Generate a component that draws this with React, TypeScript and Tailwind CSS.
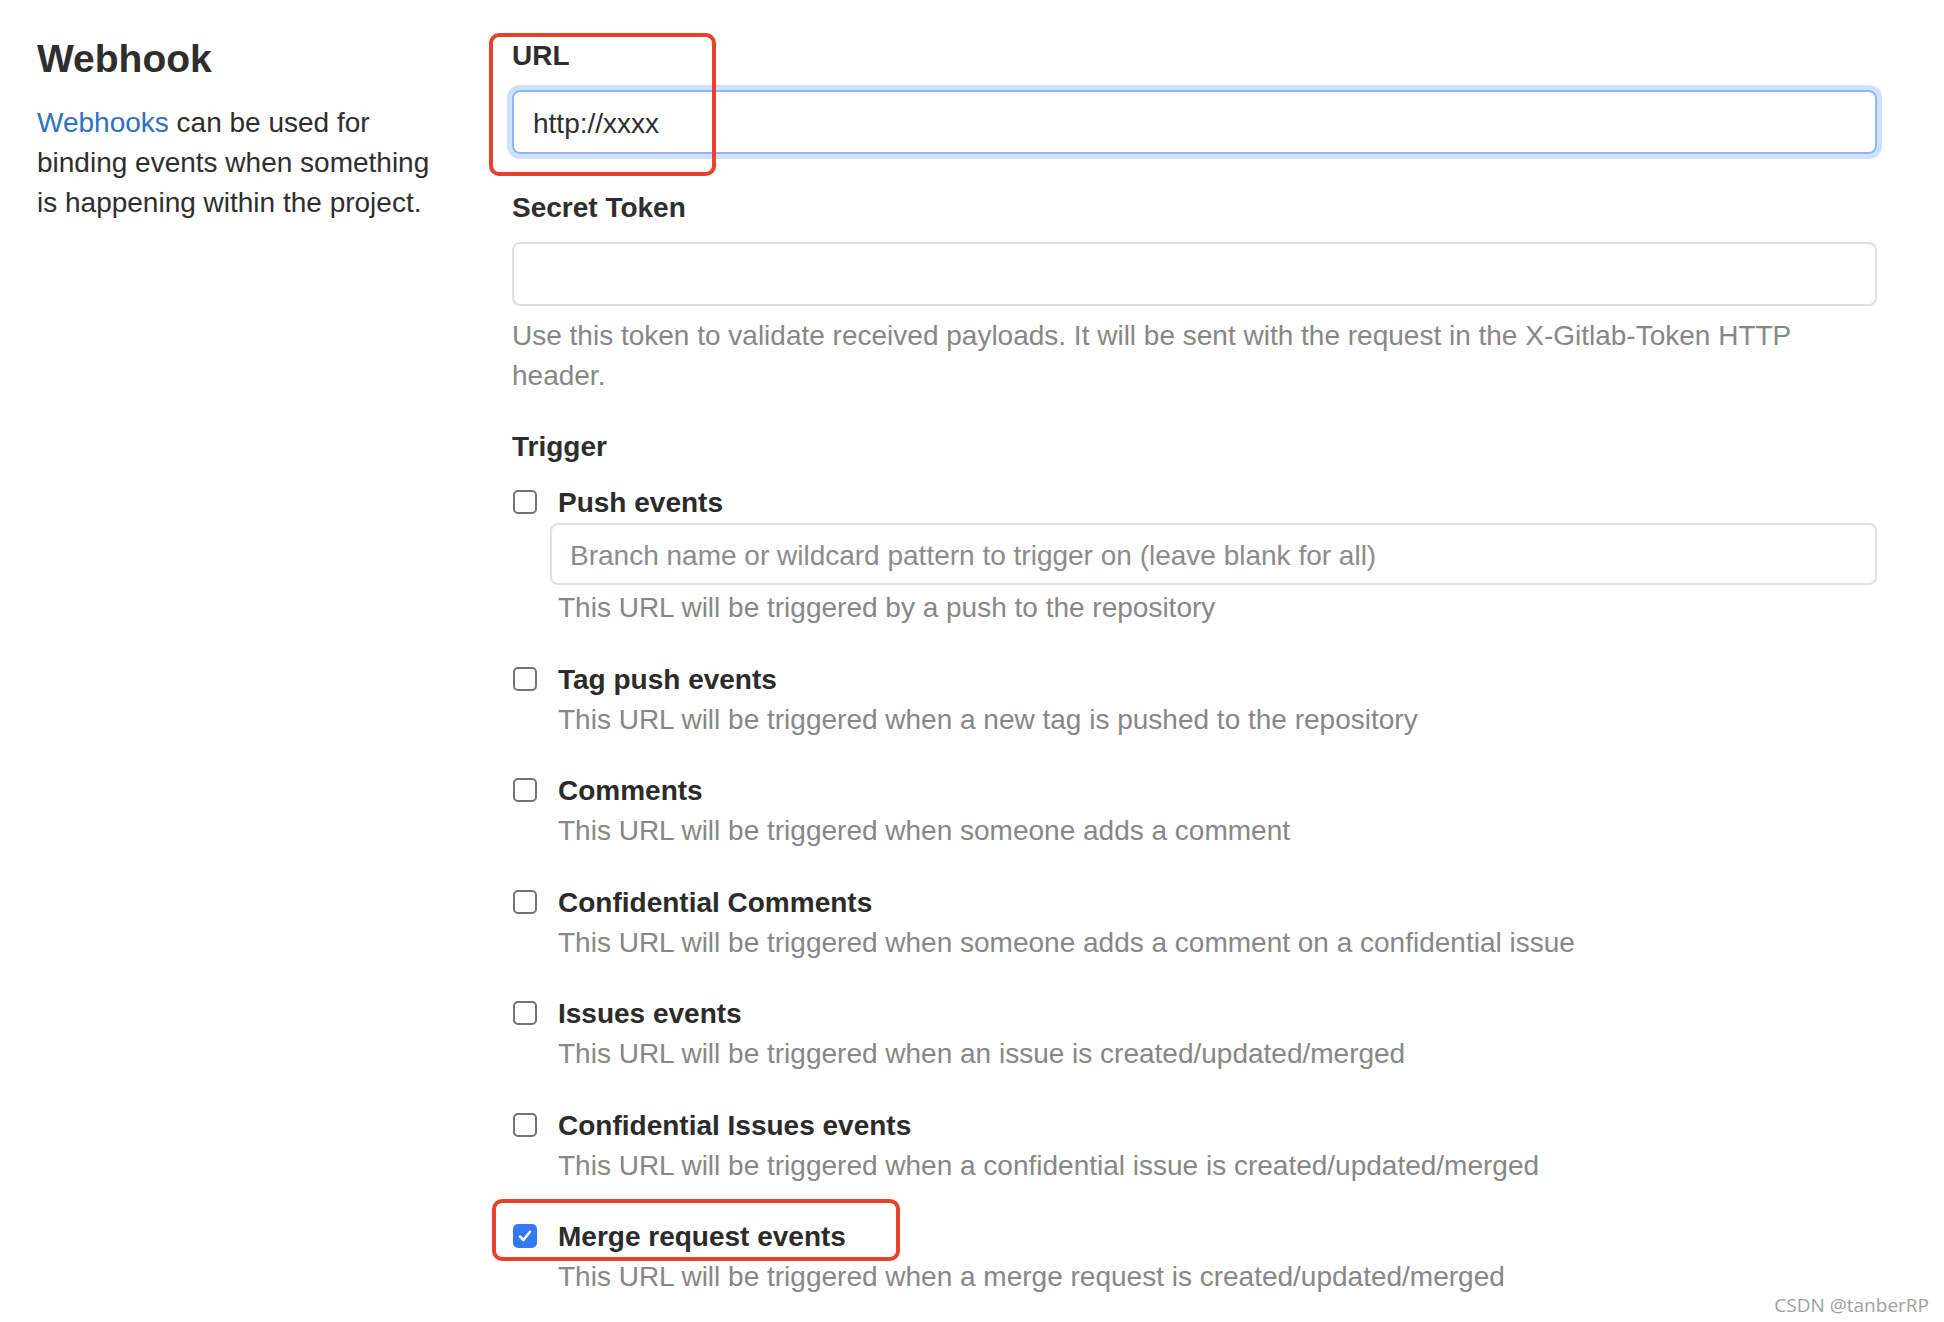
import React from "react";

type Trigger = {
  label: string;
  help: string;
  branch?: boolean;
  checked?: boolean;
  highlight?: boolean;
};

const triggers: Trigger[] = [
  { label: "Push events", help: "This URL will be triggered by a push to the repository", branch: true },
  { label: "Tag push events", help: "This URL will be triggered when a new tag is pushed to the repository" },
  { label: "Comments", help: "This URL will be triggered when someone adds a comment" },
  { label: "Confidential Comments", help: "This URL will be triggered when someone adds a comment on a confidential issue" },
  { label: "Issues events", help: "This URL will be triggered when an issue is created/updated/merged" },
  { label: "Confidential Issues events", help: "This URL will be triggered when a confidential issue is created/updated/merged" },
  {
    label: "Merge request events",
    help: "This URL will be triggered when a merge request is created/updated/merged",
    checked: true,
    highlight: true,
  },
];

function Checkbox({ checked }: { checked?: boolean }) {
  if (checked) {
    return (
      <span className="ml-[1px] flex h-[24px] w-[24px] shrink-0 items-center justify-center rounded-[5px] bg-[#3478f6]">
        <svg width="16" height="16" viewBox="0 0 16 16" fill="none">
          <path d="M3 8.6 6.4 12 13 3.8" stroke="white" strokeWidth="2.6" strokeLinecap="round" strokeLinejoin="round" />
        </svg>
      </span>
    );
  }
  return <span className="ml-[1px] block h-[24px] w-[24px] shrink-0 rounded-[5px] border-2 border-[#747474] bg-white" />;
}

function TriggerRow({ item }: { item: Trigger }) {
  return (
    <div className="relative mb-[30.5px]">
      {item.highlight && (
        <div className="pointer-events-none absolute left-[-20px] top-[-17px] h-[62px] w-[408px] rounded-[10px] border-4 border-[#e8412c]" />
      )}
      <label className="flex h-[40px] items-center">
        <Checkbox checked={item.checked} />
        <span className="ml-[21px] pt-[2px] text-[28px] font-bold leading-[40px] text-[#2b2b2b]">{item.label}</span>
      </label>
      {item.branch && (
        <input
          readOnly
          placeholder="Branch name or wildcard pattern to trigger on (leave blank for all)"
          className="ml-[38px] mt-[1px] block h-[62px] w-[1327px] rounded-[8px] border-2 border-[#e0e0e0] px-[18px] pt-[3px] text-[28px] text-[#2e2e2e] outline-none placeholder:text-[#8c8c8c]"
        />
      )}
      <p className={`ml-[46px] pt-[1px] text-[28px] leading-[40px] text-[#878787] ${item.branch ? "mt-[2px]" : ""}`}>
        {item.help}
      </p>
    </div>
  );
}

export default function App() {
  return (
    <div className="relative flex min-h-[1322px] w-[1944px] bg-white font-['Liberation_Sans',Arial,sans-serif] text-[#2e2e2e]">
      <aside className="w-[512px] shrink-0 pl-[37px] pt-[36px]">
        <h4 className="text-[39px] font-bold leading-[46px] text-[#2e2e2e]">Webhook</h4>
        <p className="mt-[21px] w-[412px] text-[28px] leading-[40px] text-[#2e2e2e]">
          <span className="text-[#2f6fc4]">Webhooks</span> can be used for binding events when something is happening
          within the project.
        </p>
      </aside>

      <section className="w-[1365px] pt-[35px]">
        <div className="relative">
          <div className="pointer-events-none absolute left-[-23px] top-[-2px] h-[143px] w-[227px] rounded-[10px] border-4 border-[#e8412c]" />
          <div className="pt-[1px] text-[28px] font-bold leading-[40px]">URL</div>
          <input
            readOnly
            defaultValue="http://xxxx"
            className="mt-[14px] block h-[64px] w-full rounded-[8px] border-2 border-[#8db6f5] px-[19px] pt-[4px] text-[28px] text-[#2e2e2e] shadow-[0_0_0_5px_#cfe1fc] outline-none"
          />
        </div>

        <div className="mt-[33px] pt-[1px] text-[28px] font-bold leading-[40px]">Secret Token</div>
        <input
          readOnly
          className="mt-[14px] block h-[64px] w-full rounded-[8px] border-2 border-[#e0e0e0] px-[19px] text-[28px] outline-none"
        />
        <p className="mt-[10px] text-[28px] leading-[40px] text-[#878787]">
          Use this token to validate received payloads. It will be sent with the request in the X-Gitlab-Token HTTP
          <br />
          header.
        </p>

        <div className="mt-[30px] pt-[1px] text-[28px] font-bold leading-[40px]">Trigger</div>
        <div className="mt-[15px]">
          {triggers.map((t) => (
            <TriggerRow key={t.label} item={t} />
          ))}
        </div>
      </section>

      <span className="absolute bottom-[8px] right-[15px] font-['Open_Sans',sans-serif] text-[19px] text-[#a0a0a0]">
        CSDN @tanberRP
      </span>
    </div>
  );
}
